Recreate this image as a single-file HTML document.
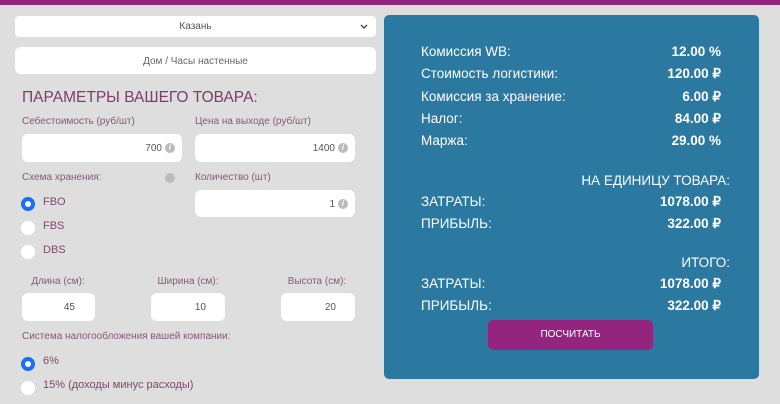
<!DOCTYPE html>
<html><head><meta charset="utf-8"><style>
*{box-sizing:border-box;margin:0;padding:0}
body{width:780px;height:404px;background:#dedede;font-family:"Liberation Sans",sans-serif;position:relative;overflow:hidden}
.a{position:absolute;white-space:nowrap}
.top{left:0;top:0;width:780px;height:5px;background:#93257f}
.box{position:absolute;background:#fff;border-radius:6px}
.lbl{font-size:10px;color:#85587a}
.val{font-size:10px;color:#555;text-align:right}
.info{position:absolute;width:10px;height:10px;border-radius:50%;background:#bbb;color:#fff;font-size:8px;font-weight:bold;text-align:center;line-height:10px;font-style:italic}
.rad{position:absolute;width:14px;height:14px;border-radius:50%;background:#fff}
.rad.on{border:4px solid #1a6ef5}
.rt{font-size:11px;color:#7b4a6c}
.p{color:#fff;font-size:13.5px}
.pv{color:#fff;font-size:13.5px;font-weight:bold;text-align:right;width:200px}
</style></head><body>
<div class="a top"></div>
<div class="box" style="left:15px;top:16px;width:361px;height:21px;border-radius:4px"></div>
<div class="a" style="left:15px;top:21px;width:361px;text-align:center;font-size:10px;color:#555">Казань</div>
<svg class="a" style="left:360px;top:24px" width="8" height="6"><path d="M1 1L4 4L7 1" stroke="#444" stroke-width="1.3" fill="none"/></svg>
<div class="box" style="left:15px;top:47px;width:361px;height:27px"></div>
<div class="a" style="left:15px;top:56px;width:361px;text-align:center;font-size:10px;color:#666">Дом / Часы настенные</div>
<div class="a" style="left:22px;top:89px;font-size:15.5px;color:#7b3d6a">ПАРАМЕТРЫ ВАШЕГО ТОВАРА:</div>
<div class="a lbl" style="left:22px;top:116px">Себестоимость (руб/шт)</div>
<div class="a lbl" style="left:195px;top:116px">Цена на выходе (руб/шт)</div>
<div class="box" style="left:22px;top:134px;width:160px;height:28px"></div>
<div class="a val" style="left:22px;top:143px;width:140px">700</div><div class="info" style="left:165px;top:143px">i</div>
<div class="box" style="left:195px;top:134px;width:160px;height:28px"></div>
<div class="a val" style="left:195px;top:143px;width:140px">1400</div><div class="info" style="left:338px;top:143px">i</div>
<div class="a lbl" style="left:22px;top:172px">Схема хранения:</div><div class="info" style="left:165px;top:173px"></div>
<div class="a lbl" style="left:195px;top:172px">Количество (шт)</div>
<div class="box" style="left:195px;top:190px;width:160px;height:27px"></div>
<div class="a val" style="left:195px;top:199px;width:140px">1</div><div class="info" style="left:338px;top:199px">i</div>
<div class="rad on" style="left:21px;top:197px"></div><div class="a rt" style="left:43px;top:196px">FBO</div>
<div class="rad" style="left:21px;top:221px"></div><div class="a rt" style="left:43px;top:220px">FBS</div>
<div class="rad" style="left:21px;top:245px"></div><div class="a rt" style="left:43px;top:244px">DBS</div>
<div class="a lbl" style="left:18px;top:276px;width:80px;text-align:center">Длина (см):</div>
<div class="a lbl" style="left:148px;top:276px;width:80px;text-align:center">Ширина (см):</div>
<div class="a lbl" style="left:277px;top:276px;width:80px;text-align:center">Высота (см):</div>
<div class="box" style="left:22px;top:293px;width:73px;height:28px"></div><div class="a val" style="left:22px;top:302px;width:53px">45</div>
<div class="box" style="left:151px;top:293px;width:74px;height:28px"></div><div class="a val" style="left:151px;top:302px;width:55px">10</div>
<div class="box" style="left:281px;top:293px;width:74px;height:28px"></div><div class="a val" style="left:281px;top:302px;width:55px">20</div>
<div class="a lbl" style="left:22px;top:331px">Система налогообложения вашей компании:</div>
<div class="rad on" style="left:21px;top:357px"></div><div class="a rt" style="left:43px;top:355px">6%</div>
<div class="rad" style="left:21px;top:381px"></div><div class="a rt" style="left:43px;top:379px">15% (доходы минус расходы)</div>
<div class="a" style="left:384px;top:15px;width:375px;height:364px;background:#2b78a1;border-radius:5px"></div>
<div class="a p" style="left:421px;top:44px">Комиссия WB:</div><div class="a pv" style="left:521px;top:44px">12.00 %</div>
<div class="a p" style="left:421px;top:66px">Стоимость логистики:</div><div class="a pv" style="left:521px;top:66px">120.00 ₽</div>
<div class="a p" style="left:421px;top:89px">Комиссия за хранение:</div><div class="a pv" style="left:521px;top:89px">6.00 ₽</div>
<div class="a p" style="left:421px;top:111px">Налог:</div><div class="a pv" style="left:521px;top:111px">84.00 ₽</div>
<div class="a p" style="left:421px;top:133px">Маржа:</div><div class="a pv" style="left:521px;top:133px">29.00 %</div>
<div class="a p" style="left:480px;top:173px;width:250px;text-align:right">НА ЕДИНИЦУ ТОВАРА:</div>
<div class="a p" style="left:421px;top:194px">ЗАТРАТЫ:</div><div class="a pv" style="left:521px;top:194px">1078.00 ₽</div>
<div class="a p" style="left:421px;top:216px">ПРИБЫЛЬ:</div><div class="a pv" style="left:521px;top:216px">322.00 ₽</div>
<div class="a p" style="left:480px;top:255px;width:250px;text-align:right">ИТОГО:</div>
<div class="a p" style="left:421px;top:276px">ЗАТРАТЫ:</div><div class="a pv" style="left:521px;top:276px">1078.00 ₽</div>
<div class="a p" style="left:421px;top:298px">ПРИБЫЛЬ:</div><div class="a pv" style="left:521px;top:298px">322.00 ₽</div>
<div class="a" style="left:488px;top:320px;width:165px;height:30px;background:#93257f;border-radius:5px;color:#fff;font-size:10px;text-align:center;line-height:30px">ПОСЧИТАТЬ</div>
</body></html>
